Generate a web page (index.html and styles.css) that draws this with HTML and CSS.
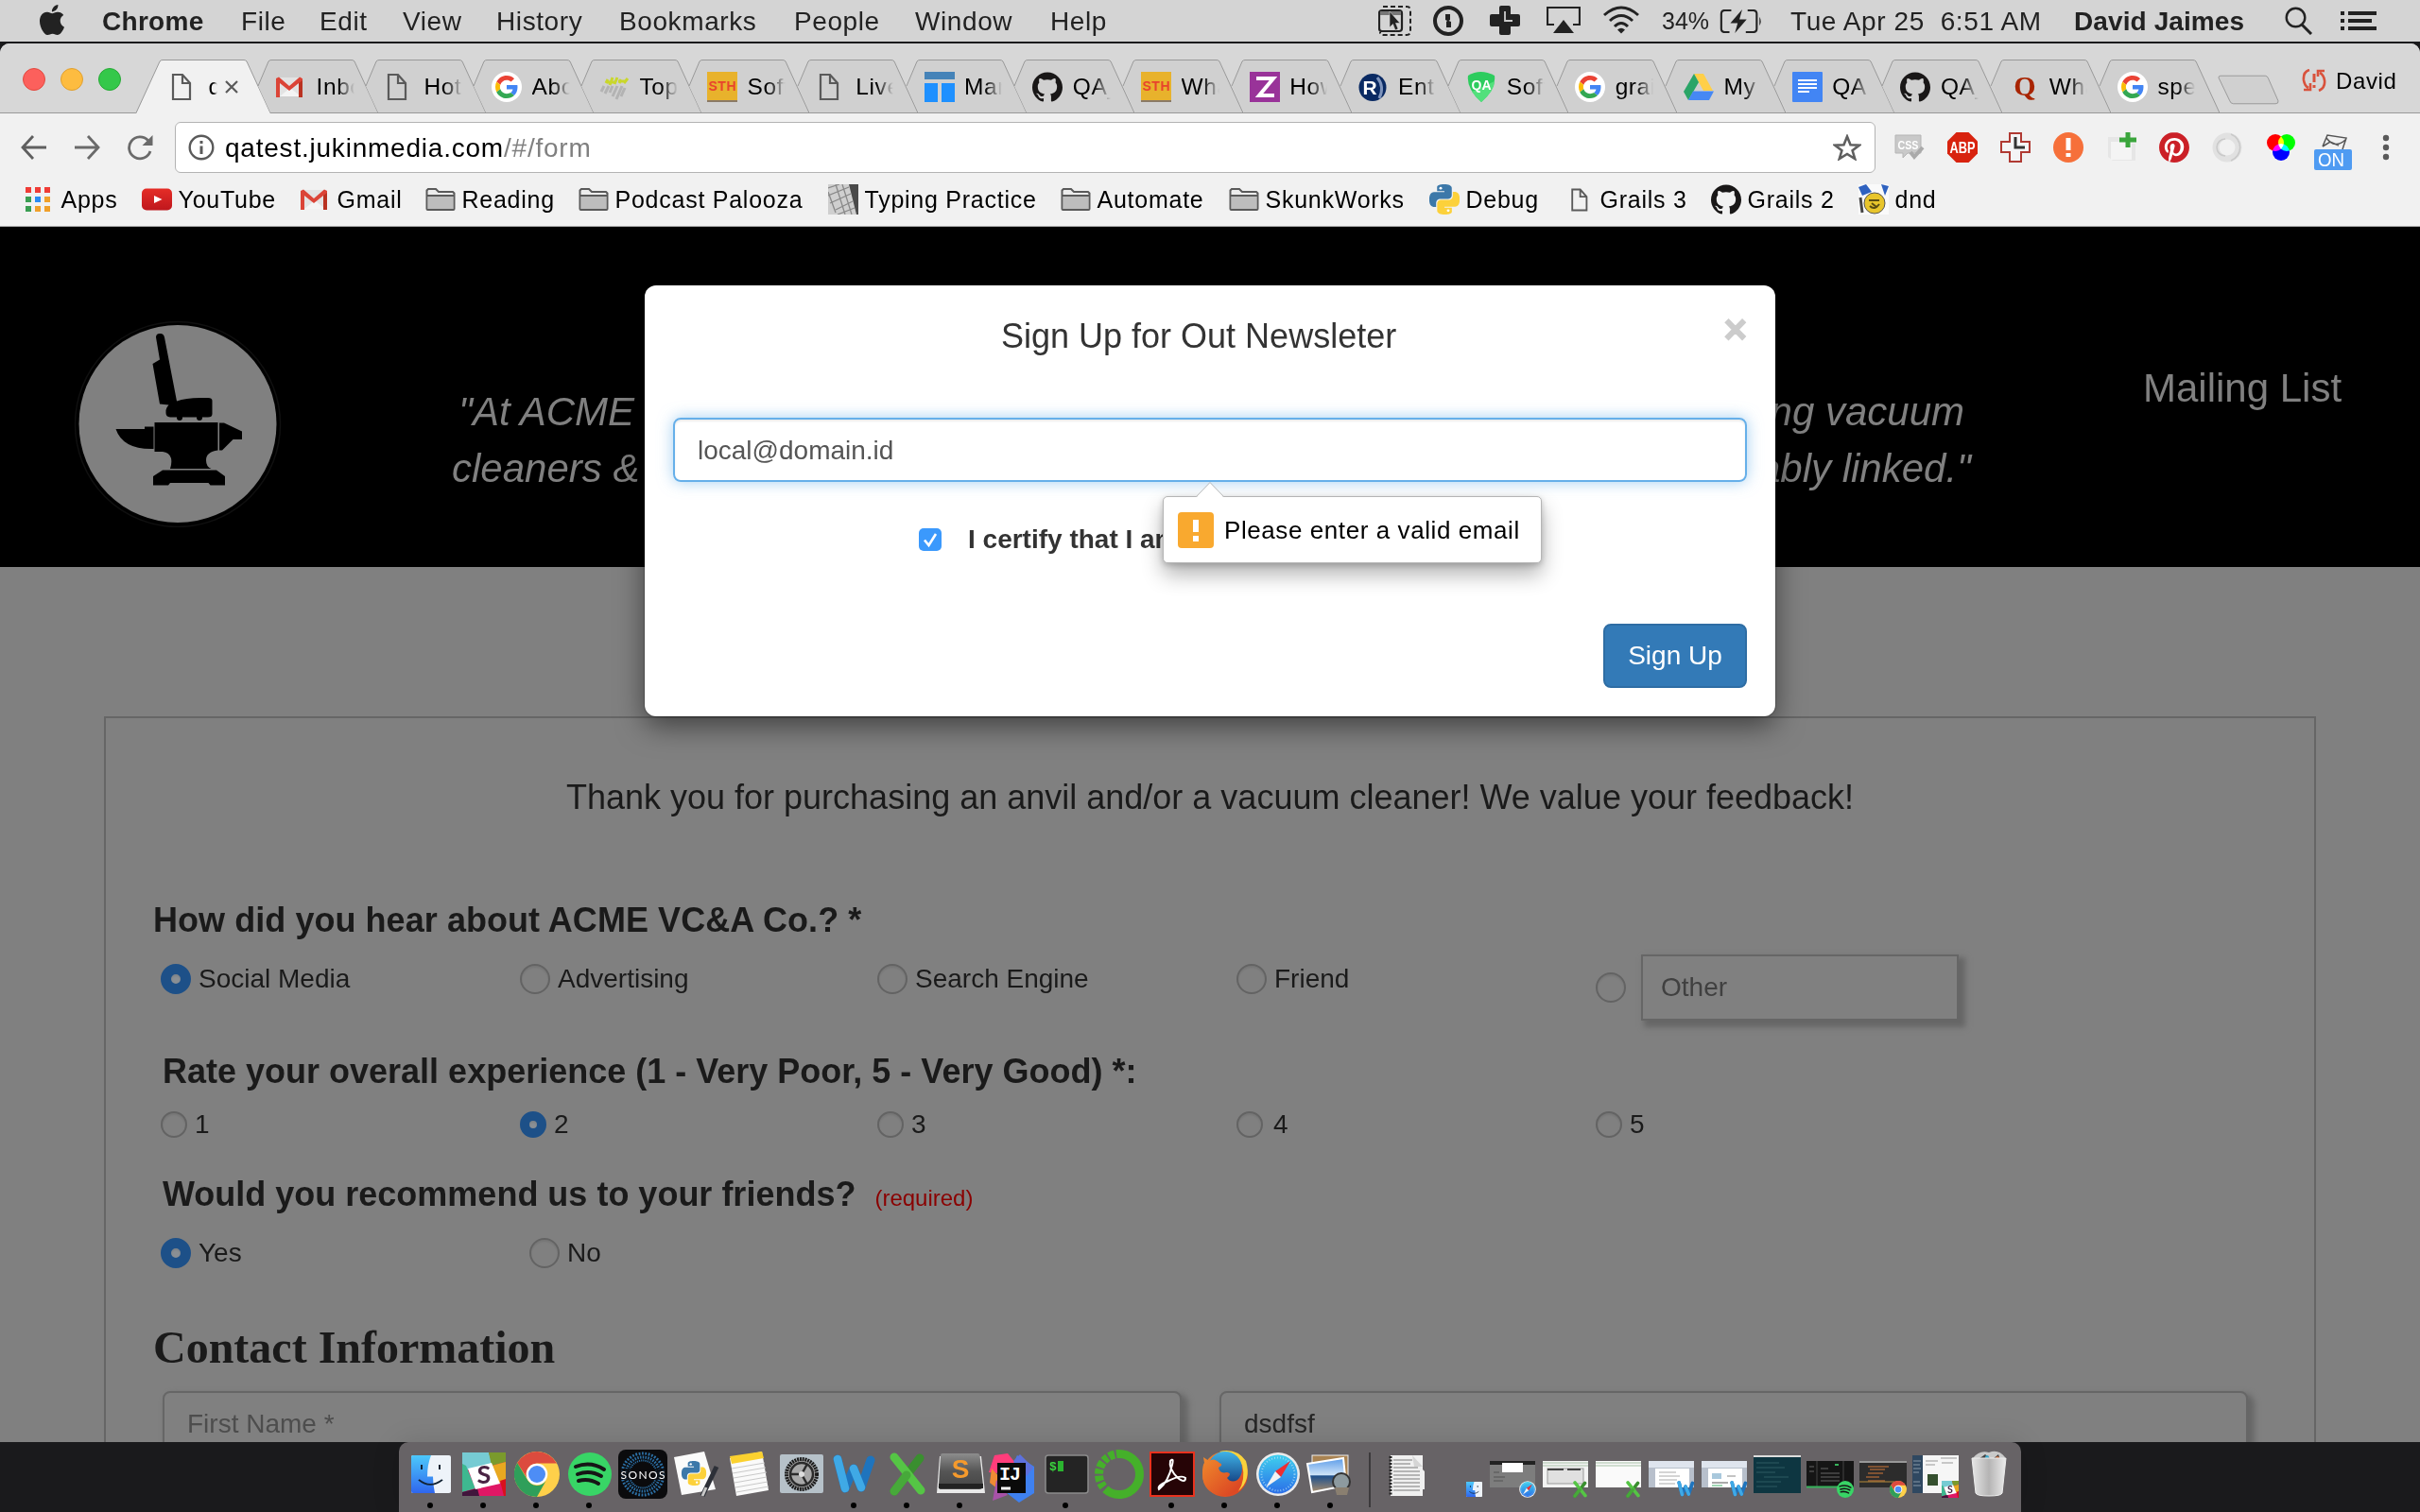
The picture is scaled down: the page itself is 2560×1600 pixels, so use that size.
FILE: index.html
```html
<!DOCTYPE html>
<html lang="en">
<head>
<meta charset="utf-8">
<title>ACME VC&amp;A Co.</title>
<link rel="stylesheet" href="styles.css">
</head>
<body>
<svg class="defs" width="0" height="0">
  <defs>
    <linearGradient id="g-finder" x1="0" y1="0" x2="0" y2="1"><stop offset="0" stop-color="#4cc9fb"/><stop offset="1" stop-color="#2f66ee"/></linearGradient>
    <linearGradient id="g-grey" x1="0" y1="0" x2="0" y2="1"><stop offset="0" stop-color="#8d8d8d"/><stop offset=".5" stop-color="#555"/><stop offset="1" stop-color="#444"/></linearGradient>
    <linearGradient id="g-safari" x1="0" y1="0" x2="0" y2="1"><stop offset="0" stop-color="#3fd0ee"/><stop offset="1" stop-color="#2b6ee8"/></linearGradient>
    <linearGradient id="g-ff" x1="0" y1="0" x2="0" y2="1"><stop offset="0" stop-color="#3fb4e8"/><stop offset="1" stop-color="#123a7c"/></linearGradient>
    <linearGradient id="g-fox" x1="0" y1="0" x2="1" y2="1"><stop offset="0" stop-color="#f08a2c"/><stop offset="1" stop-color="#d83c22"/></linearGradient>
    <linearGradient id="g-sky" x1="0" y1="0" x2="0" y2="1"><stop offset="0" stop-color="#5b9be8"/><stop offset=".5" stop-color="#cfe4f8"/><stop offset=".52" stop-color="#1d4f8c"/><stop offset="1" stop-color="#a88d6c"/></linearGradient>
    <linearGradient id="g-yt" x1="0" y1="0" x2="0" y2="1"><stop offset="0" stop-color="#e52d27"/><stop offset="1" stop-color="#bf171d"/></linearGradient>
    <linearGradient id="g-word" x1="0" y1="0" x2="0" y2="1"><stop offset="0" stop-color="#4dbdf0"/><stop offset="1" stop-color="#2b8fd8"/></linearGradient>
    <linearGradient id="g-trash" x1="0" y1="0" x2="1" y2="0"><stop offset="0" stop-color="#e6e6e6"/><stop offset=".5" stop-color="#b5b4b4"/><stop offset="1" stop-color="#ececec"/></linearGradient>
  </defs>
  <symbol id="tab-on" viewBox="0 0 142 57"><path d="M0 57 25 2Q26 .5 28 .5H114Q116 .5 117 2L142 57Z" fill="#f1f1f1"/><path d="M0 56.5 25 2Q26 .5 28 .5H114Q116 .5 117 2L142 56.5" fill="none" stroke="#999"/></symbol>
  <symbol id="tab-off" viewBox="0 0 142 57"><path d="M28 56 15 28 26 2Q27 .5 29 .5H114Q116 .5 117 2L142 56Z" fill="#d0d0d0"/><path d="M15 28 26 2Q27 .5 29 .5H114Q116 .5 117 2L142 56.5" fill="none" stroke="#999"/></symbol>
  <symbol id="i-file" viewBox="0 0 32 32"><path d="M5 3H15L23 12V29H5Z M15 3V12H23" fill="none" stroke="#5a5a5a" stroke-width="2.200"/></symbol>
  <symbol id="i-gmail" viewBox="0 0 32 32"><rect x="2" y="6" width="26" height="20" fill="#e3e3e3"/><path d="M4 26 15 17 26 26Z" fill="#f4f4f4"/><path d="M0 7V27H4V12L14 20 24 12V27H28V7L25 5.500 14 15 3 5.500Z" fill="#db4437"/><path d="M24 12V27H28V9Z" fill="#b93221"/></symbol>
  <symbol id="i-google" viewBox="0 0 32 32"><circle cx="16" cy="16" r="16" fill="#fff"/><g transform="translate(4 4) scale(.5)"><path fill="#EA4335" d="M24 9.500c3.540 0 6.710 1.220 9.210 3.600l6.850-6.850C35.900 2.380 30.470 0 24 0 14.620 0 6.510 5.380 2.560 13.220l7.980 6.190C12.430 13.720 17.740 9.500 24 9.500z"/><path fill="#4285F4" d="M46.980 24.550c0-1.570-.15-3.090-.38-4.550H24v9.020h12.940c-.58 2.960-2.260 5.480-4.780 7.180l7.730 6c4.510-4.180 7.090-10.360 7.090-17.650z"/><path fill="#FBBC05" d="M10.530 28.590c-.48-1.450-.76-2.990-.76-4.590s.27-3.140.76-4.590l-7.980-6.190C.92 16.460 0 20.120 0 24c0 3.880.92 7.540 2.560 10.780l7.970-6.190z"/><path fill="#34A853" d="M24 48c6.480 0 11.930-2.130 15.890-5.810l-7.730-6c-2.150 1.450-4.920 2.300-8.160 2.300-6.260 0-11.570-4.220-13.470-9.910l-7.980 6.190C6.510 42.620 14.620 48 24 48z"/></g></symbol>
  <symbol id="i-top" viewBox="0 0 32 32"><g stroke-width="3"><path d="M7 12 9 8M11 14 14 6M16 13 19 6M21 12 23 8M26 12 30 7M7 11H17M20 10H28" stroke="#c9d72b"/><path d="M2 21 5 15M6 23 10 15M11 22 14 15M14 26 19 15M18 29 24 15M23 26 27 17" stroke="#b3b3b3"/></g></symbol>
  <symbol id="i-sth" viewBox="0 0 32 32"><rect width="32" height="32" fill="#e8b22c"/><rect y="30" width="32" height="2" fill="#8a7a66"/><text x="16" y="20" text-anchor="middle" class="t-sth" textLength="29">STH</text></symbol>
  <symbol id="i-github" viewBox="0 0 24 24"><path fill="#191717" d="M12 .297c-6.630 0-12 5.373-12 12 0 5.303 3.438 9.800 8.205 11.385.6.113.82-.258.82-.577 0-.285-.01-1.040-.015-2.040-3.338.724-4.042-1.610-4.042-1.610C4.422 18.070 3.633 17.700 3.633 17.700c-1.087-.744.084-.729.084-.729 1.205.084 1.838 1.236 1.838 1.236 1.070 1.835 2.809 1.305 3.495.998.108-.776.417-1.305.76-1.605-2.665-.3-5.466-1.332-5.466-5.930 0-1.310.465-2.380 1.235-3.220-.135-.303-.54-1.523.105-3.176 0 0 1.005-.322 3.300 1.230.96-.267 1.980-.399 3-.405 1.020.006 2.040.138 3 .405 2.280-1.552 3.285-1.230 3.285-1.230.645 1.653.24 2.873.12 3.176.765.84 1.230 1.910 1.230 3.220 0 4.610-2.805 5.625-5.475 5.920.42.36.81 1.096.81 2.220 0 1.606-.015 2.896-.015 3.286 0 .315.21.69.825.57C20.565 22.092 24 17.592 24 12.297c0-6.627-5.373-12-12-12"/></symbol>
  <symbol id="i-folder" viewBox="0 0 32 32"><path d="M1.500 26V6.500L3 5H11L14 8H29L30.500 9.500V26Q30.500 27 29.500 27H2.500Q1.500 27 1.500 26Z" fill="#ececec" stroke="#5a5a5a" stroke-width="2"/><path d="M3 13H29V26H3Z" fill="#bdbdbd"/><path d="M2 12H30" stroke="#5a5a5a" stroke-width="2"/></symbol>
  <symbol id="i-python" viewBox="0 0 24 24"><path fill="#3c78a9" fill-rule="evenodd" d="M14.250.18l.9.2.73.26.59.3.45.32.34.34.25.34.16.33.1.3.04.26.02.2-.01.13V8.500l-.05.63-.13.55-.21.46-.26.38-.3.31-.33.25-.35.19-.35.14-.33.1-.3.07-.26.04-.21.02H8.770l-.69.05-.59.14-.5.22-.41.27-.33.32-.27.35-.2.36-.15.37-.1.35-.07.32-.04.27-.02.21v3.060H3.170l-.21-.03-.28-.07-.32-.12-.35-.18-.36-.26-.36-.36-.35-.46-.32-.59-.28-.73-.21-.88-.14-1.050-.05-1.230.06-1.220.16-1.040.24-.87.32-.71.36-.57.4-.44.42-.33.42-.24.4-.16.36-.1.32-.05.24-.01h.16l.06.01h8.160v-.83H6.180l-.01-2.750-.02-.37.05-.34.11-.31.17-.28.25-.26.31-.23.38-.2.44-.18.51-.15.58-.12.64-.1.71-.06.77-.04.84-.02 1.270.05z"/><path fill="#fcd13b" d="M21.100 6.110l.28.06.32.12.35.18.36.27.36.35.35.47.32.59.28.73.21.88.14 1.040.05 1.230-.06 1.230-.16 1.040-.24.86-.32.71-.36.57-.4.45-.42.33-.42.24-.4.16-.36.09-.32.05-.24.02-.16-.01h-8.220v.82h5.840l.01 2.760.02.36-.05.34-.11.31-.17.29-.25.25-.31.24-.38.2-.44.17-.51.15-.58.13-.64.09-.71.07-.77.04-.84.01-1.270-.04-1.070-.14-.9-.2-.73-.25-.59-.3-.45-.33-.34-.34-.25-.34-.16-.33-.1-.3-.04-.25-.02-.2.01-.13v-5.340l.05-.64.13-.54.21-.46.26-.38.3-.32.33-.24.35-.2.35-.14.33-.1.3-.06.26-.04.21-.02.13-.01h5.840l.69-.05.59-.14.5-.21.41-.28.33-.32.27-.35.2-.36.15-.36.1-.35.07-.32.04-.28.02-.21V6.070h2.090l.14.01z"/><circle cx="9" cy="3.100" r="1.100" fill="#fff"/><circle cx="15" cy="20.900" r="1.100" fill="#fff"/></symbol>
  <symbol id="d-finder" viewBox="0 0 42 48" preserveAspectRatio="none"><rect width="42" height="48" rx="2" fill="#eef3f9"/><path d="M2 0H21Q17 12 17 27H23Q23 38 25 48H2Q0 48 0 46V2Q0 0 2 0Z" fill="url(#g-finder)"/><path d="M11 12V18M30 12V18M8 31Q20 43 33 31" stroke="#123" stroke-width="2" fill="none"/></symbol>
  <symbol id="d-slack" viewBox="0 0 46 46"><rect width="46" height="46" rx="3" fill="#e01765"/><path d="M0 0H28L32 13 3 19 0 20Z" fill="#76cbd3"/><path d="M28 0H46V10L31 14Z" fill="#7a9a2c"/><path d="M46 10V30L36 33 31 14Z" fill="#e8a820"/><path d="M0 12 4 14 14 38 0 42Z" fill="#3eb890"/><path d="M0 42 16 38 18 46H0Z" fill="#41153c"/><path d="M40 30 46 28V46H44Z" fill="#d8111c"/><path d="M6 17 31 11 40 33 14 39Z" fill="#fff"/><text x="23" y="33" text-anchor="middle" class="t-slack">S</text></symbol>
  <symbol id="d-chrome" viewBox="0 0 48 48"><circle cx="24" cy="24" r="24" fill="#ffd04a"/><path d="M3.200 12A24 24 0 0 1 45 12.500H24A11.500 11.500 0 0 0 13.500 28Z" fill="#dc4b3e"/><path d="M3.200 12A24 24 0 0 0 24 48L33.500 31A11.500 11.500 0 0 1 14 30Z" fill="#2f9f5a"/><circle cx="24" cy="24" r="11.300" fill="#fff"/><circle cx="24" cy="24" r="9" fill="#4d8df6"/></symbol>
  <symbol id="d-spotify" viewBox="0 0 46 46"><circle cx="23" cy="23" r="23" fill="#38d566"/><path d="M8 15Q24 9 38 18M10 23Q23 18 35 25M11 30Q22 27 32 33" fill="none" stroke="#161616" stroke-width="4" stroke-linecap="round"/></symbol>
  <symbol id="d-word" viewBox="0 0 46 42"><path d="M5 5 13 36 22 15 30 35 40 6" fill="none" stroke="#1f74bd" stroke-width="9" stroke-linecap="round" stroke-linejoin="round"/><path d="M5 5 13 36M22 15 30 35" fill="none" stroke="#3fa9e6" stroke-width="8.500" stroke-linecap="round"/></symbol>
  <symbol id="d-excel" viewBox="0 0 38 46"><path d="M32 6 5 41" stroke="#3a8f2f" stroke-width="9" stroke-linecap="round"/><path d="M5 5 33 40" stroke="#55c545" stroke-width="9" stroke-linecap="round"/><path d="M5 41 18 24" stroke="#47a93a" stroke-width="9" stroke-linecap="round"/></symbol>
  <symbol id="d-safari" viewBox="0 0 52 46"><ellipse cx="26" cy="23" rx="23" ry="23" fill="#ececec"/><circle cx="26" cy="23" r="20.500" fill="url(#g-safari)"/><circle cx="26" cy="23" r="17.500" fill="none" stroke="#a9dcf5" stroke-width="2" stroke-dasharray=".8 2.200"/><path d="M39 9 29 26 23 20Z" fill="#ee2d31"/><path d="M13 37 23 20 29 26Z" fill="#f2f2f2"/></symbol>
</svg>

<header class="menubar">
  <svg class="apple" viewBox="0 0 24 24"><path fill="#222" d="M12.152 6.896c-.948 0-2.415-1.078-3.960-1.040-2.040.027-3.910 1.183-4.961 3.014-2.117 3.675-.546 9.103 1.519 12.090 1.013 1.454 2.208 3.090 3.792 3.039 1.520-.065 2.090-.987 3.935-.987 1.831 0 2.350.987 3.960.948 1.637-.026 2.676-1.480 3.676-2.948 1.156-1.688 1.636-3.325 1.662-3.415-.039-.013-3.182-1.221-3.220-4.857-.026-3.040 2.480-4.494 2.597-4.559-1.429-2.090-3.623-2.324-4.390-2.376-2-.156-3.675 1.090-4.610 1.090zM15.530 3.830c.843-1.012 1.400-2.427 1.245-3.830-1.207.052-2.662.805-3.532 1.818-.78.896-1.454 2.338-1.273 3.714 1.338.104 2.715-.688 3.559-1.701"/></svg>
  <nav class="app-menu"><b>Chrome</b><span>File</span><span>Edit</span><span>View</span><span>History</span><span>Bookmarks</span><span>People</span><span>Window</span><span>Help</span></nav>
  <div class="status">
    <svg viewBox="0 0 36 32"><path d="M5 1H30Q34 1 34 5V27Q34 31 30 31H5Q2 31 2 28" fill="none" stroke="#222" stroke-width="2" stroke-dasharray="5 3"/><rect x="1" y="5" width="24" height="22" rx="3" fill="none" stroke="#222" stroke-width="2.200"/><path d="M2 6H24V10H2Z" fill="#777"/><path d="M12 6V23L15.500 19.500 18 26 21 24.500 18.500 18.500H23Z" fill="#222" stroke="#d4d4d4" stroke-width=".6"/></svg>
    <svg viewBox="0 0 36 32"><circle cx="17" cy="16" r="14" fill="none" stroke="#222" stroke-width="4"/><path d="M14 9H19V15L17.500 16 20 17V23H15V17L16 16 14 15Z" fill="#222"/></svg>
    <svg viewBox="0 0 36 32"><path d="M10 2Q10 0 12 0H20Q22 0 22 2V9H30Q32 9 32 11V20Q32 22 30 22H22V29Q22 31 20 31H12Q10 31 10 29V22H2Q0 22 0 20V11Q0 9 2 9H10Z" fill="#222"/><path d="M16 6V16H24" fill="none" stroke="#ccc" stroke-width="1.800"/></svg>
    <svg viewBox="0 0 36 32"><path d="M8 20H1V2H35V20H28" fill="none" stroke="#222" stroke-width="2.200"/><path d="M7 29 18 15 29 29Z" fill="#222"/></svg>
    <svg viewBox="0 0 40 32" class="wifi"><path d="M2 10Q20-6 38 10M8 16Q20 5 32 16M13 22Q20 15 27 22" fill="none" stroke="#222" stroke-width="3"/><path d="M16 25.500Q20 22 24 25.500L20 29.500Z" fill="#222"/></svg>
    <span class="pct">34%</span>
    <svg viewBox="0 0 46 26" class="batt"><path d="M12 1H5Q1 1 1 5V21Q1 25 5 25H10M30 1H36Q40 1 40 5V21Q40 25 36 25H28" fill="none" stroke="#222" stroke-width="2.200"/><path d="M43 8Q46 13 43 18Z" fill="#222"/><path d="M24 0 11 15H19L16 26 29 11H21Z" fill="#222"/></svg>
    <span>Tue Apr 25&nbsp; 6:51 AM</span>
    <b>David Jaimes</b>
    <svg viewBox="0 0 30 30" class="search"><circle cx="11.500" cy="11.500" r="9.800" fill="none" stroke="#222" stroke-width="2.400"/><path d="M18 19 28 29" stroke="#222" stroke-width="3"/></svg>
    <svg viewBox="0 0 38 22" class="list"><path d="M0 3H4M8 3H38M0 11H4M8 11H33M0 19H4M8 19H38" stroke="#222" stroke-width="4"/></svg>
  </div>
</header>

<section class="window">
  <div class="tabstrip">
    <div class="lights"><i></i><i></i><i></i></div>
    <div class="tabs">
      <div class="tab on"><svg class="shape"><use href="#tab-on"/></svg><svg class="fav"><use href="#i-file"/></svg><span>q</span><svg class="x" viewBox="0 0 14 14"><path d="M1 1 13 13M13 1 1 13" stroke="#5a5a5a" stroke-width="2.200"/></svg></div>
      <div class="tab"><svg class="shape"><use href="#tab-off"/></svg><svg class="fav"><use href="#i-gmail"/></svg><span>Inbox</span></div>
      <div class="tab"><svg class="shape"><use href="#tab-off"/></svg><svg class="fav"><use href="#i-file"/></svg><span>Hot</span></div>
      <div class="tab"><svg class="shape"><use href="#tab-off"/></svg><svg class="fav"><use href="#i-google"/></svg><span>Abo</span></div>
      <div class="tab"><svg class="shape"><use href="#tab-off"/></svg><svg class="fav"><use href="#i-top"/></svg><span>Top</span></div>
      <div class="tab"><svg class="shape"><use href="#tab-off"/></svg><svg class="fav"><use href="#i-sth"/></svg><span>Soft</span></div>
      <div class="tab"><svg class="shape"><use href="#tab-off"/></svg><svg class="fav"><use href="#i-file"/></svg><span>Live</span></div>
      <div class="tab"><svg class="shape"><use href="#tab-off"/></svg><svg class="fav" viewBox="0 0 32 32"><path d="M0 0H32V8H0Z" fill="#4583b8"/><path d="M0 12H14V32H0ZM18 12H32V32H18Z" fill="#1e90ff"/></svg><span>Man</span></div>
      <div class="tab"><svg class="shape"><use href="#tab-off"/></svg><svg class="fav"><use href="#i-github"/></svg><span>QA_</span></div>
      <div class="tab"><svg class="shape"><use href="#tab-off"/></svg><svg class="fav"><use href="#i-sth"/></svg><span>Wha</span></div>
      <div class="tab"><svg class="shape"><use href="#tab-off"/></svg><svg class="fav" viewBox="0 0 32 32"><rect width="32" height="32" fill="#993399"/><path d="M7 7H25L10 25H26" fill="none" stroke="#fff" stroke-width="4"/></svg><span>How</span></div>
      <div class="tab"><svg class="shape"><use href="#tab-off"/></svg><svg class="fav" viewBox="0 0 32 32"><circle cx="15" cy="16.500" r="14.500" fill="#0a2a63"/><path d="M20 6Q28 16 22 28" stroke="#7f95bd" stroke-width="3" fill="none"/><text x="12" y="24" text-anchor="middle" class="t-r">R</text></svg><span>Ente</span></div>
      <div class="tab"><svg class="shape"><use href="#tab-off"/></svg><svg class="fav" viewBox="0 0 32 32"><path d="M2 4Q15-4 30 4Q32 18 16 32Q0 18 2 4Z" fill="#2dcc5e"/><path d="M30 10Q30 20 16 32Q10 27 6 21Z" fill="#52e07c"/><text x="16" y="19" text-anchor="middle" class="t-qa">QA</text></svg><span>Soft</span></div>
      <div class="tab"><svg class="shape"><use href="#tab-off"/></svg><svg class="fav"><use href="#i-google"/></svg><span>grai</span></div>
      <div class="tab"><svg class="shape"><use href="#tab-off"/></svg><svg class="fav" viewBox="0 0 32 32"><path d="M11 2H21L31 20H21Z" fill="#ffcf48"/><path d="M11 2 0 21 5 30 16 11Z" fill="#2aa567"/><path d="M10 20.500H32L27 30H5Z" fill="#4688f4"/></svg><span>My</span></div>
      <div class="tab"><svg class="shape"><use href="#tab-off"/></svg><svg class="fav" viewBox="0 0 32 32"><rect width="32" height="32" rx="1" fill="#4285f4"/><path d="M6 9H26M6 13H26M6 17H26M6 21H18" stroke="#fff" stroke-width="2.200"/></svg><span>QA</span></div>
      <div class="tab"><svg class="shape"><use href="#tab-off"/></svg><svg class="fav"><use href="#i-github"/></svg><span>QA_</span></div>
      <div class="tab"><svg class="shape"><use href="#tab-off"/></svg><svg class="fav" viewBox="0 0 32 32"><text x="17" y="25" text-anchor="middle" class="t-q">Q</text></svg><span>Wha</span></div>
      <div class="tab"><svg class="shape"><use href="#tab-off"/></svg><svg class="fav"><use href="#i-google"/></svg><span>spe</span></div>
    </div>
    <svg class="newtab" viewBox="0 0 66 32"><path d="M3 1H51Q53 1 54 3L65 28Q65.500 31 62 31H17Q14 31 13 28L1 3Q1 1 3 1Z" fill="#d0d0d0" stroke="#999"/></svg>
    <svg class="sync" viewBox="0 0 26 24"><path d="M8 1Q1 3 2 12Q3 18 7 20M18 23Q25 20 24 12Q23 6 19 4M9 15V22H2M17 8V2H24" fill="none" stroke="#d9523c" stroke-width="2.600"/><path d="M13 5V14M13 17V20" stroke="#d9523c" stroke-width="3"/></svg>
    <span class="who">David</span>
  </div>

  <div class="toolbar">
    <svg class="nav" viewBox="0 0 28 28"><path d="M27 14H2M13 2 2 14 13 26" fill="none" stroke="#5f5f5f" stroke-width="2.800"/></svg>
    <svg class="nav" viewBox="0 0 28 28"><path d="M1 14H26M15 2 26 14 15 26" fill="none" stroke="#6a6a6a" stroke-width="2.800"/></svg>
    <svg class="nav" viewBox="0 0 28 28"><path d="M22.500 6.500A11.500 11.500 0 1 0 25 18" fill="none" stroke="#6a6a6a" stroke-width="2.800"/><path d="M27.500 1V12H16.500Z" fill="#6a6a6a"/></svg>
    <div class="omnibox">
      <svg class="info" viewBox="0 0 28 28"><circle cx="14" cy="14" r="12.300" fill="none" stroke="#5a5a5a" stroke-width="2.400"/><path d="M14 7V10M14 12.500V21" stroke="#5a5a5a" stroke-width="3"/></svg>
      <span class="url">qatest.jukinmedia.com<em>/#/form</em></span>
      <svg class="star" viewBox="0 0 30 28"><path d="M15 2.500 18.500 11.200 28 11.600 20.600 17.300 23.200 26 15 21 6.800 26 9.400 17.300 2 11.600 11.500 11.200Z" fill="none" stroke="#5f5f5f" stroke-width="2.600"/></svg>
    </div>
    <div class="exts">
      <svg viewBox="0 0 32 32"><path d="M1 3H28V22H14L9 27V22H1Z" fill="#c9c9c9" stroke="#b5b5b5"/><text x="14.500" y="18" text-anchor="middle" class="t-css" textLength="22" lengthAdjust="spacingAndGlyphs">CSS</text><path d="M17 21 21 26 30 16" fill="none" stroke="#aaa" stroke-width="4"/></svg>
      <svg viewBox="0 0 32 32"><path d="M9.500 0H22.500L32 9.500V22.500L22.500 32H9.500L0 22.500V9.500Z" fill="#d8230f"/><text x="16" y="22" text-anchor="middle" class="t-abp" textLength="27" lengthAdjust="spacingAndGlyphs">ABP</text></svg>
      <svg viewBox="0 0 32 32"><path d="M10 1H22V10H31V21H22V31H10V21H1V10H10Z" fill="#f4f4f6" stroke="#b03a33" stroke-width="2"/><path d="M16 5V16H26" fill="none" stroke="#333" stroke-width="3"/></svg>
      <svg viewBox="0 0 32 32"><circle cx="16" cy="16" r="16" fill="#f6703a"/><path d="M16 6V19M16 22V26" stroke="#fff" stroke-width="5"/></svg>
      <svg viewBox="0 0 32 32"><path d="M1 5H14V12H30V30H6L1 26Z" fill="#e6e6e6"/><path d="M4 10H26V29H4Z" fill="#f4f4f4"/><path d="M22 0V16M13 8H31" stroke="#3aa53c" stroke-width="5"/></svg>
      <svg viewBox="0 0 24 24"><circle cx="12" cy="12" r="10" fill="#fff"/><path fill="#cb2027" d="M12.017 0C5.396 0 .029 5.367.029 11.987c0 5.079 3.158 9.417 7.618 11.162-.105-.949-.199-2.403.041-3.439.219-.937 1.406-5.957 1.406-5.957s-.359-.72-.359-1.781c0-1.663.967-2.911 2.168-2.911 1.024 0 1.518.769 1.518 1.688 0 1.029-.653 2.567-.992 3.992-.285 1.193.6 2.165 1.775 2.165 2.128 0 3.768-2.245 3.768-5.487 0-2.861-2.063-4.869-5.008-4.869-3.410 0-5.409 2.562-5.409 5.199 0 1.033.394 2.143.889 2.741.099.12.112.225.085.345-.09.375-.293 1.199-.334 1.363-.053.225-.172.271-.401.165-1.495-.69-2.433-2.878-2.433-4.646 0-3.776 2.748-7.252 7.920-7.252 4.158 0 7.392 2.967 7.392 6.923 0 4.135-2.607 7.462-6.233 7.462-1.214 0-2.354-.629-2.758-1.379l-.749 2.848c-.269 1.045-1.004 2.352-1.498 3.146 1.123.345 2.306.535 3.550.535 6.607 0 11.985-5.365 11.985-11.987C23.970 5.390 18.592.026 11.985.026L12.017 0z"/></svg>
      <svg viewBox="0 0 32 32"><circle cx="16" cy="16" r="12" fill="none" stroke="#e1e1e1" stroke-width="7"/><path d="M14 7A9 9 0 0 0 14 25M20 2A15 15 0 0 1 20 30" fill="none" stroke="#c9c9c9" stroke-width="1.500"/></svg>
      <svg viewBox="0 0 32 32"><g class="rgb"><circle cx="10" cy="11" r="9" fill="#f00"/><circle cx="22" cy="11" r="9" fill="#0f0"/><circle cx="16" cy="21" r="9" fill="#00f"/></g></svg>
      <svg viewBox="0 0 40 40" class="onext"><path d="M9 15 14 3 34 6 30 18M13 6Q22 18 33 8M9 15 17 10 26 14" fill="none" stroke="#555" stroke-width="1.500"/><rect y="18" width="40" height="22" rx="2" fill="#4f9bf2"/><text x="18" y="36" text-anchor="middle" class="t-on" textLength="28" lengthAdjust="spacingAndGlyphs">ON</text></svg>
      <svg viewBox="0 0 8 28" class="dots"><circle cx="4" cy="4" r="3.200"/><circle cx="4" cy="14" r="3.200"/><circle cx="4" cy="24" r="3.200"/></svg>
    </div>
  </div>

  <nav class="bookmarks">
    <a><svg viewBox="0 0 32 32"><path d="M1 3H7V9H1ZM11 3H17V9H11ZM21 3H27V9H21Z" fill="#ef3c36"/><path d="M1 13H7V19H1ZM1 23H7V29H1Z" fill="#3a9e52"/><path d="M11 13H17V19H11Z" fill="#2a8bf2"/><path d="M11 23H17V29H11Z" fill="#f0a02a"/><path d="M21 13H27V19H21ZM21 23H27V29H21Z" fill="#f0a02a"/></svg>Apps</a>
    <a><svg viewBox="0 0 32 32"><rect y="4.500" width="32" height="23" rx="5" fill="url(#g-yt)"/><path d="M13 12 21.500 16 13 20Z" fill="#fff"/></svg>YouTube</a>
    <a><svg><use href="#i-gmail"/></svg>Gmail</a>
    <a><svg><use href="#i-folder"/></svg>Reading</a>
    <a><svg><use href="#i-folder"/></svg>Podcast Palooza</a>
    <a><svg viewBox="0 0 32 32"><rect width="32" height="32" fill="#cfcfcf"/><path d="M22 0H32V32H30Z" fill="#4a4a4a"/><path d="M0 4 12 0M0 12 22 3M2 20 24 10M8 27 26 18M10 32 28 25M8 0 18 32M0 8 8 30M15 0 25 32" stroke="#888" stroke-width="1.300"/></svg>Typing Practice</a>
    <a><svg><use href="#i-folder"/></svg>Automate</a>
    <a><svg><use href="#i-folder"/></svg>SkunkWorks</a>
    <a><svg><use href="#i-python"/></svg>Debug</a>
    <a><svg class="small"><use href="#i-file"/></svg>Grails 3</a>
    <a><svg><use href="#i-github"/></svg>Grails 2</a>
    <a><svg viewBox="0 0 32 32"><rect width="32" height="32" fill="#fafafa"/><path d="M0 3 8 0 14 8 4 12ZM24 0 32 2 28 12Z" fill="#2f62c0"/><circle cx="17" cy="20" r="11" fill="#e8c52c" stroke="#555"/><path d="M11 17H22M12 23Q17 28 22 21M14 20 19 24" stroke="#5a4c12" stroke-width="2" fill="none"/><path d="M2 14 4 30" stroke="#444" stroke-width="3"/></svg>dnd</a>
  </nav>

  <main class="page">
    <header class="hero">
      <svg class="logo" viewBox="78 338 220 220"><circle cx="188" cy="449" r="108.500" fill="none" stroke="#101010" stroke-width="1.500"/><circle cx="188" cy="448.500" r="104.500" fill="#808080"/>
        <path d="M165 357Q165 353 169 353Q173 352.500 174 357L187 424.500Q196 421 212 421H220Q224.500 421 224.500 424V438Q224.500 441.500 220 441.500H180Q175.500 441 175.500 437V434Q176 431 178.500 428.500L169 427.500 161.500 385 169 380.500Z"/><circle cx="190" cy="442" r="3"/><circle cx="211" cy="442" r="3"/>
        <path d="M122.500 454H153V451.500H162.500V475Q130 476 122.500 454ZM163.500 447H230.500V476.500Q218 478 218 487Q218 494 223.500 496H180Q182 490 181 485Q179 478.500 172 478H163.500ZM232 447.500H237L256 456.500V465H246.500L235 476.500H232ZM172 497.500H229L238 504V513.500H222.500L220.500 511H180L178 513.500H162V504Z"/></svg>
      <div class="quote"><p><span>"At ACME</span><span>ing vacuum</span></p><p><span>cleaners &amp;</span><span>ably linked."</span></p></div>
      <a class="mailing">Mailing List</a>
    </header>
    <form class="survey">
      <p class="thanks">Thank you for purchasing an anvil and/or a vacuum cleaner! We value your feedback!</p>
      <h3 class="q q1">How did you hear about ACME VC&amp;A Co.? *</h3>
      <div class="opts big">
        <label><i class="on"></i>Social Media</label><label><i></i>Advertising</label><label><i></i>Search Engine</label><label><i></i>Friend</label><label class="other"><i></i><span class="field">Other</span></label>
      </div>
      <h3 class="q q2">Rate your overall experience (1 - Very Poor, 5 - Very Good) *:</h3>
      <div class="opts"><label><i></i>1</label><label><i class="on"></i>2</label><label><i></i>3</label><label class="four"><i></i>4</label><label><i></i>5</label></div>
      <h3 class="q q3">Would you recommend us to your friends? <small>(required)</small></h3>
      <div class="opts yesno"><label><i class="on"></i>Yes</label><label><i></i>No</label></div>
      <h2>Contact Information</h2>
      <div class="inputs"><span class="ph">First Name *</span><span>dsdfsf</span></div>
    </form>
  </main>
</section>

<div class="modal">
  <div class="modal-head"><h4>Sign Up for Out Newsleter</h4><b class="close">×</b></div>
  <div class="email">local@domain.id</div>
  <div class="certify"><svg class="check" viewBox="0 0 24 24"><rect width="24" height="24" rx="5" fill="#3b99fc"/><path d="M6 12.500 10.500 18 18 6" fill="none" stroke="#fff" stroke-width="2.600"/></svg><b>I certify that I am</b></div>
  <div class="actions"><button type="button">Sign Up</button></div>
  <div class="tip">
    <svg class="arrow" viewBox="0 0 32 18"><path d="M1 18 16 2 31 18Z" fill="#fff"/><path d="M1 17 16 1.500 31 17" fill="none" stroke="#bbb"/></svg>
    <svg class="warn" viewBox="0 0 38 38"><rect width="38" height="38" rx="4" fill="#f9a92f"/><path d="M19 8V21M19 25V31" stroke="#fff" stroke-width="6"/></svg>
    <span>Please enter a valid email</span>
  </div>
</div>

<footer class="dock">
  <svg viewBox="0 0 56 74"><use href="#d-finder" x="7" y="14" width="42" height="40"/><circle cx="27" cy="67" r="3"/></svg>
  <svg viewBox="0 0 56 74"><use href="#d-slack" x="5" y="11" width="46" height="46"/><circle cx="27" cy="67" r="3"/></svg>
  <svg viewBox="0 0 56 74"><use href="#d-chrome" x="4" y="10" width="48" height="48"/><circle cx="27" cy="67" r="3"/></svg>
  <svg viewBox="0 0 56 74"><use href="#d-spotify" x="5" y="11" width="46" height="46"/><circle cx="27" cy="67" r="3"/></svg>
  <svg viewBox="0 0 56 74"><rect x="2" y="8" width="52" height="52" rx="8" fill="#0b0b0d"/><g fill="none" stroke="#2b6fa5"><circle cx="28" cy="34" r="22" stroke-width="3" stroke-dasharray="1.800 1.600"/><circle cx="28" cy="34" r="18" stroke-width="3" stroke-dasharray="1.500 1.300"/><circle cx="28" cy="34" r="14.500" stroke-width="2" stroke-dasharray="1.200 1"/></g><rect x="3" y="28" width="50" height="12" fill="#0b0b0d" opacity=".75"/><text x="28" y="38.500" text-anchor="middle" class="t-sonos" textLength="47">SONOS</text></svg>
  <svg viewBox="0 0 56 74"><path d="M5 16 37 10 49 50 13 56Z" fill="#fbfbfb"/><use href="#i-python" x="12" y="20" width="28" height="26"/><path d="M50 26 35 57" stroke="#2d3038" stroke-width="5"/><path d="M39 48 35 57" stroke="#c8c8c8" stroke-width="3"/></svg>
  <svg viewBox="0 0 56 74"><path d="M8 17 42 10 49 51 15 57Z" fill="#fafafa"/><path d="M8 15 42 10 44 17 10 23Z" fill="#fbd12f"/><path d="M10 28 45 22M11 33 46 27M12 38 47 32M13 43 47 37M14 48 48 42M15 53 49 47" stroke="#c9c9c9"/></svg>
  <svg viewBox="0 0 56 74"><rect x="5" y="13" width="46" height="41" rx="2" fill="#b6c1c9"/><circle cx="28" cy="34" r="16" fill="#a5a5a5" stroke="#1c1c1c" stroke-width="4" stroke-dasharray="2 .8"/><circle cx="28" cy="34" r="12" fill="#a8a8a8" stroke="#2b2b2b" stroke-width="2.500"/><path d="M28 34 16 34M28 34 34 23M28 34 34 45" stroke="#2b2b2b" stroke-width="2.500"/><circle cx="28" cy="34" r="3" fill="#ddd"/></svg>
  <svg viewBox="0 0 56 74"><use href="#d-word" x="5" y="13" width="46" height="42"/><circle cx="27" cy="67" r="3"/></svg>
  <svg viewBox="0 0 56 74"><use href="#d-excel" x="9" y="11" width="38" height="46"/><circle cx="27" cy="67" r="3"/></svg>
  <svg viewBox="0 0 56 74"><path d="M6 15H50L54 54H3Z" fill="#e9e9e9"/><path d="M9 12H46Q48 12 48.500 14L52 46Q52 50 48 50H8Q4 50 5 46L7 14Q7 12 9 12Z" fill="url(#g-grey)"/><path d="M5 44H52V49H5Z" fill="#222"/><text x="28" y="38" text-anchor="middle" class="t-sub">S</text><circle cx="27" cy="67" r="3"/></svg>
  <svg viewBox="0 0 56 74"><path d="M8 14 22 12 30 22 24 34 2 32Z" fill="#ff3d7b"/><path d="M5 28 16 40 12 50 3 43Z" fill="#ef8b33"/><path d="M32 14 50 26V54L34 64 16 50Z" fill="#3f81f0"/><path d="M35 13 49 27 42 36 28 20Z" fill="#5d71dd"/><path d="M6 62 10 40 22 56Z" fill="#a752a8"/><rect x="11" y="22" width="30" height="32" fill="#0a0a0a"/><path d="M15 49H25" stroke="#fff" stroke-width="3"/><text x="13" y="40" class="t-ij">IJ</text></svg>
  <svg viewBox="0 0 56 74"><rect x="6" y="14" width="45" height="40" rx="3" fill="#242424" stroke="#8c8c8c" stroke-width="1.500"/><text x="10" y="30" class="t-term">$</text><rect x="19" y="20" width="6" height="11" fill="#2bb52f"/><circle cx="27" cy="67" r="3"/></svg>
  <svg viewBox="0 0 56 74"><circle cx="28" cy="34" r="21.500" fill="none" stroke="#45b02a" stroke-width="9" stroke-dasharray="85 3 5 2 6 2 5 2 6 2 5 2 6 2 5 2" transform="rotate(-95 28 34)"/></svg>
  <svg viewBox="0 0 56 74"><rect x="5" y="11" width="46" height="46" fill="#260406" stroke="#e9321e" stroke-width="2"/><path d="M14 50Q24 42 28 24Q30 16 26 20Q24 28 34 38Q42 44 42 38Q38 34 22 42Q12 46 14 50Z" fill="none" stroke="#fff" stroke-width="2"/><circle cx="27" cy="67" r="3"/></svg>
  <svg viewBox="0 0 56 74"><circle cx="28" cy="34" r="24" fill="url(#g-fox)"/><path d="M22 10Q40 6 50 20Q56 40 42 52Q50 40 46 24Z" fill="#f9d33c"/><circle cx="28" cy="28" r="18" fill="url(#g-ff)"/><path d="M5 16 11 20Q16 16 22 22Q27 24 21 27Q22 34 30 32Q36 33 30 38Q36 46 46 36Q44 56 26 57Q4 54 4 34Q4 24 6 22Z" fill="url(#g-fox)"/><circle cx="27" cy="67" r="3"/></svg>
  <svg viewBox="0 0 56 74"><use href="#d-safari" x="2" y="11" width="52" height="46"/><circle cx="27" cy="67" r="3"/></svg>
  <svg viewBox="0 0 56 74"><rect x="8" y="14" width="38" height="30" fill="#a98352" stroke="#eee"/><path d="M3 23 41 17 44 46 8 53Z" fill="url(#g-sky)" stroke="#fff" stroke-width="2"/><circle cx="39" cy="42" r="9" fill="#8d9a9f" stroke="#333" stroke-width="2"/><path d="M32 48H47L45 56H34Z" fill="#8a7f70"/><circle cx="27" cy="67" r="3"/></svg>
  <i class="sep"></i>
  <svg viewBox="0 0 56 74"><path d="M11 14H45V29L47 31V50H45V57H11Z" fill="#f0f0f0"/><path d="M14 19H34M14 23H32M14 27H40M14 31H42M14 35H42M14 39H42M14 43H42M14 47H42M14 51H42" stroke="#b5b5b5" stroke-width="2"/><path d="M11 15V56" stroke="#222" stroke-width="3" stroke-dasharray="2 1.500"/><path d="M34 14 45 26H36Z" fill="#d5d5d5"/></svg>
  <svg viewBox="0 0 56 74"><use href="#d-finder" x="35" y="42" width="17" height="16"/></svg>
  <svg viewBox="0 0 56 74"><rect x="4" y="20" width="48" height="28" fill="#7d7d7d"/><rect x="4" y="20" width="48" height="4" fill="#222"/><rect x="17" y="22" width="22" height="10" fill="#fff"/><path d="M8 32H14M8 37H20M8 41H18" stroke="#555"/><use href="#d-safari" x="34" y="41" width="20" height="18"/></svg>
  <svg viewBox="0 0 56 74"><rect x="4" y="20" width="48" height="28" fill="#f3f3f3"/><path d="M4 22H52M4 25H52" stroke="#c2d3c2" stroke-width="1.500"/><rect x="9" y="28" width="38" height="16" fill="#e0e0e0" stroke="#999"/><path d="M9 29H26M30 29H44" stroke="#444" stroke-width="2"/><use href="#d-excel" x="35" y="41" width="17" height="18"/></svg>
  <svg viewBox="0 0 56 74"><rect x="4" y="20" width="48" height="28" fill="#fafafa"/><path d="M4 22H52M4 25H52" stroke="#c2d3c2" stroke-width="1.500"/><use href="#d-excel" x="35" y="41" width="17" height="18"/></svg>
  <svg viewBox="0 0 56 74"><rect x="4" y="20" width="48" height="28" fill="#b8c0cc"/><path d="M4 20H52V27H4Z" fill="#dfe5ee"/><rect x="11" y="28" width="36" height="20" fill="#fff"/><path d="M15 32H33M15 36H37M15 40H34M15 44H32" stroke="#aaa"/><use href="#d-word" x="34" y="41" width="19" height="17"/></svg>
  <svg viewBox="0 0 56 74"><rect x="4" y="20" width="48" height="28" fill="#b8c0cc"/><path d="M4 20H52V27H4Z" fill="#dfe5ee"/><rect x="11" y="28" width="36" height="20" fill="#fff"/><rect x="15" y="33" width="10" height="6" fill="#a9c8dc"/><path d="M31 36H40" stroke="#888"/><path d="M15 43H32" stroke="#555"/><path d="M15 46H26" stroke="#42b06a"/><use href="#d-word" x="34" y="41" width="19" height="17"/></svg>
  <svg viewBox="0 0 56 74"><rect x="3" y="14" width="50" height="40" fill="#0e3641"/><rect x="3" y="14" width="50" height="2" fill="#ddd"/><path d="M6 22H30M6 27H36M6 32H26M14 37H40M6 42H32M6 47H28" stroke="#2d5a62"/></svg>
  <svg viewBox="0 0 56 74"><rect x="3" y="20" width="50" height="28" fill="#151515"/><path d="M14 20V48M42 20V48" stroke="#444"/><path d="M18 28H26M18 33H38M18 37H38M18 41H38M6 26H11M6 31H11" stroke="#666"/><path d="M3 47.500H36" stroke="#37b35b" stroke-width="2"/><rect x="33" y="23" width="4" height="2" fill="#37b35b"/><use href="#d-spotify" x="35" y="41" width="18" height="18"/></svg>
  <svg viewBox="0 0 56 74"><rect x="3" y="20" width="50" height="28" fill="#2c2c2c"/><rect x="3" y="20" width="50" height="2" fill="#999"/><path d="M12 26H34M14 29H30M12 33H28M10 37H24M12 41H30" stroke="#9a5f35" stroke-width="1.500"/><path d="M3 42H40" stroke="#b58a3a"/><use href="#d-chrome" x="35" y="41" width="18" height="18"/></svg>
  <svg viewBox="0 0 56 74"><rect x="3" y="14" width="49" height="40" fill="#f6f6f6"/><rect x="3" y="14" width="11" height="40" fill="#2f4861"/><path d="M4 20H12M4 24H11M4 28H12M4 32H10M4 42H11M4 46H12" stroke="#8898a8"/><path d="M17 20H30M17 24H27M33 17H50M34 22H46" stroke="#999"/><rect x="19" y="34" width="11" height="12" fill="#35502f"/><use href="#d-slack" x="34" y="41" width="18" height="18"/></svg>
  <svg viewBox="0 0 56 74"><path d="M11 17Q18 8 28 11Q38 7 45 16L44 20H12Z" fill="#c9c9c9"/><path d="M17 18 24 13 30 18ZM32 18 38 13 40 19Z" fill="#454545"/><circle cx="26" cy="16" r="2" fill="#3aa6c9"/><circle cx="37" cy="17" r="2" fill="#c96a3a"/><path d="M10 17H46L42 54Q41 57 28 57Q15 57 14 54Z" fill="url(#g-trash)" stroke="#eee"/></svg>
</footer>
</body>
</html>
```
FILE: styles.css
```css
* { box-sizing: border-box; }
html, body { margin: 0; width: 2560px; height: 1600px; overflow: hidden; }
body {
  position: relative;
  display: flex;
  flex-direction: column;
  background: #1a1a1c;
  font-family: "Liberation Sans", Arial, sans-serif;
  color: #000;
  white-space: nowrap;
}
p, h2, h3, h4 { margin: 0; }
svg { display: block; flex: none; }
.defs { position: absolute; }

/* menu bar */
.menubar {
  display: flex;
  align-items: center;
  height: 44px;
  margin-bottom: 2px;
  background: #d4d4d4;
  font-size: 28px;
  line-height: 45px;
  letter-spacing: .6px;
  color: #222;
}
.apple { width: 32px; height: 32px; margin: -3px 0 0 39px; }
.app-menu {
  display: grid;
  grid-template-columns: 147px 83px 88px 99px 130px 185px 128px 143px 80px;
  margin-left: 37px;
}
.app-menu b { letter-spacing: .3px; }
.status {
  display: grid;
  align-items: center;
  grid-template-columns: 57px 61px 60px 58px 64px 61px 75px 300px 223px 59px 38px;
  margin-left: 267px;
}
.status svg { width: 36px; height: 32px; }
.status .wifi { width: 42px; }
.status .batt { width: 46px; height: 25px; }
.status .search { width: 30px; height: 30px; }
.status .list { width: 38px; height: 22px; }
.status .pct { font-size: 25px; letter-spacing: 0; }
.status b { letter-spacing: .1px; }

/* browser window */
.window { flex: none; height: 1480px; background: #f1f1f1; border-radius: 10px 10px 0 0; overflow: hidden; }
.tabstrip { display: flex; height: 74px; background: #d7d7d7; box-shadow: inset 0 -1px #999; }
.lights { display: flex; gap: 16px; padding: 26px 0 0 24px; width: 144px; }
.lights i { width: 24px; height: 24px; border-radius: 50%; border: 1px solid #e2493f; background: #fc605c; }
.lights i:nth-child(2) { background: #fdbc40; border-color: #e0a030; }
.lights i:nth-child(3) { background: #34c84a; border-color: #27aa35; }
.tabs { display: flex; padding: 17px 0 0 34px; width: 2202px; }
.tab { position: relative; display: flex; flex: none; width: 114.77px; height: 57px; padding-top: 13px; font-size: 24.5px; line-height: 32px; letter-spacing: .6px; }
.tab:nth-child(-n+5) { width: 114px; }
.tab .shape { position: absolute; left: -34px; top: 0; width: 142px; height: 57px; }
.fav { position: relative; width: 32px; height: 32px; }
.tab span { position: relative; width: 40px; margin-left: 10.500px; overflow: hidden; -webkit-mask-image: linear-gradient(90deg, #000 55%, transparent); mask-image: linear-gradient(90deg, #000 55%, transparent); }
.tab.on span { width: 9px; }
.tab .x { position: relative; width: 14px; height: 14px; margin: 9px 0 0 8px; }
.newtab { width: 65px; height: 32px; margin-top: 33px; }
.sync { width: 26px; height: 24px; margin: 27px 0 0 24px; }
.who { margin: 23px 0 0 10px; font-size: 24px; line-height: 34px; letter-spacing: .6px; }

.toolbar { display: flex; align-items: center; height: 72px; padding-left: 22px; }
.nav { width: 28px; height: 28px; margin-right: 28px; }
.omnibox { display: flex; align-items: center; width: 1799px; height: 54px; margin-left: -5px; border: 1px solid #b3b3b3; border-radius: 6px; background: #fff; }
.info { width: 28px; height: 28px; margin: 0 11px 0 13px; }
.url { flex: 1; padding-top: 2px; font-size: 28px; line-height: 50px; letter-spacing: .78px; }
.url em { font-style: normal; color: #808080; }
.star { width: 30px; height: 28px; margin-right: 14px; }
.exts { display: grid; align-items: center; grid-template-columns: 56px 56px 56px 57px 55px 56px 57px 51px 72px 8px; margin-left: 20px; }
.exts svg { width: 32px; height: 32px; }
.exts .onext { width: 40px; height: 40px; margin-top: 8px; }
.exts .dots { width: 8px; height: 28px; fill: #5a5a5a; }
.rgb circle { mix-blend-mode: screen; }
.rgb { isolation: isolate; }

.bookmarks {
  display: grid;
  grid-template-columns: 124px 168px 132px 162px 264px 246px 178px 212px 147px 151px 156px 140px;
  height: 48px;
  padding-left: 26px;
  box-shadow: inset 0 -1px #b0b0b0;
  font-size: 25px;
  letter-spacing: .75px;
}
.bookmarks a { display: flex; align-items: center; height: 38px; gap: 6.500px; line-height: 38px; }
.bookmarks svg { width: 32px; height: 32px; }
.bookmarks svg.small { width: 27px; height: 27px; }

/* page */
.page { height: 1286px; background: #808080; overflow: hidden; font-size: 28px; color: #1a1a1a; }
.hero { display: flex; height: 360px; background: #000; color: #808080; font-size: 42px; line-height: 61px; }
.logo { width: 220px; height: 220px; margin: 98px 180px 0 78px; }
.quote { width: 1607px; padding-top: 165px; font-style: italic; }
.quote p { display: flex; justify-content: space-between; height: 60px; }
.quote p:first-child { padding: 0 7px 0 7px; }
.mailing { margin: 140px 0 0 182px; }

.survey { width: 2340px; height: 1000px; margin: 158px 0 0 110px; border: 2px solid #666; padding-left: 48px; }
.thanks { margin-left: -48px; text-align: center; font-size: 36px; line-height: 168px; }
.q { font-size: 36px; font-weight: bold; }
.q1 { padding: 9px 0 0 2px; height: 82px; line-height: 73px; letter-spacing: .05px; }
.q2 { padding: 11px 0 0 12px; height: 96px; line-height: 85px; }
.q3 { padding: 13px 0 0 12px; height: 106px; line-height: 93px; }
.q small { margin-left: 10px; font-size: 24px; font-weight: normal; color: #8a0000; }
.opts { display: grid; grid-template-columns: 380px 378px 380px 380px 420px; height: 28px; margin-left: 10px; line-height: 28px; }
.opts label { display: flex; align-items: center; gap: 8px; }
.opts .four { gap: 11px; }
.opts i { flex: none; width: 28px; height: 28px; border: 2px solid #636363; border-radius: 50%; box-shadow: inset 0 2px 2px rgba(0, 0, 0, .08); }
.opts i.on { border: 10px solid #1d5088; background: #8a8f94; }
.opts.big { height: 70px; }
.opts.big label { height: 52px; }
.opts.big i, .opts.yesno i { width: 32px; height: 32px; }
.opts.big .on, .opts.yesno .on { border-width: 11px; }
.opts.big .other { height: 69px; gap: 16px; }
.other .field { align-self: flex-start; width: 336px; height: 70px; padding-left: 19px; border: 2px solid #666; line-height: 66px; color: #404040; box-shadow: 5px 5px 6px 2px #666; background: #808080; }
.opts.yesno { grid-template-columns: 390px 390px; height: 32px; line-height: 32px; }
.survey h2 { height: 130px; padding: 38px 0 0 2px; font: bold 48px/92px "Liberation Serif", "Times New Roman", serif; }
.inputs { display: grid; grid-template-columns: 1078px 1088px; gap: 40px; margin-left: 12px; }
.inputs span { height: 68px; padding-left: 24px; border: 2px solid #666; border-radius: 8px; line-height: 65px; box-shadow: 5px 5px 6px 2px #666; background: #808080; color: #262626; }
.inputs .ph { color: #4d4d4d; }

/* newsletter dialog */
.modal {
  position: absolute;
  left: 682px;
  top: 302px;
  width: 1196px;
  height: 456px;
  padding: 0 30px;
  border-radius: 12px;
  background: #fff;
  box-shadow: 0 10px 30px rgba(0, 0, 0, .5), 0 0 0 1px rgba(0, 0, 0, .2);
  color: #333;
  font-size: 28px;
}
.modal-head { display: flex; height: 140px; padding-left: 347px; }
.modal h4 { flex: 1; font-size: 36px; font-weight: normal; line-height: 108px; }
.close { font-size: 42px; line-height: 93px; color: #ccc; -webkit-text-stroke: 1.500px #ccc; }
.email { height: 68px; padding-left: 24px; border: 2px solid #66afe9; border-radius: 8px; line-height: 65px; color: #555; box-shadow: 0 0 16px rgba(102, 175, 233, .6), inset 0 2px 2px rgba(0, 0, 0, .075); }
.certify { display: flex; align-items: center; height: 122px; padding-left: 260px; gap: 28px; }
.check { width: 24px; height: 24px; }
.actions { display: flex; justify-content: flex-end; padding-top: 28px; }
.actions button { width: 152px; height: 68px; padding: 0; border: 2px solid #2e6da4; border-radius: 8px; background: #337ab7; color: #fff; font: 28px/64px "Liberation Sans", Arial, sans-serif; }
.tip { position: absolute; left: 548px; top: 223px; display: flex; align-items: center; width: 401px; height: 71px; padding-left: 15px; gap: 11px; border: 1px solid #b5b5b5; border-radius: 5px; background: #fff; box-shadow: 0 12px 22px rgba(0, 0, 0, .3), 0 2px 6px rgba(0, 0, 0, .2); color: #000; font-size: 26px; line-height: 32px; letter-spacing: .58px; }
.arrow { position: absolute; left: 33px; top: -17px; width: 32px; height: 18px; }
.warn { width: 38px; height: 38px; }

/* dock */
.dock { position: absolute; left: 422px; top: 1526px; display: flex; width: 1716px; height: 74px; padding-left: 6px; border-radius: 10px 10px 0 0; background: #676366; box-shadow: 0 0 30px rgba(0, 0, 0, .12); }
.dock svg { width: 56px; height: 74px; }
.sep { width: 2px; height: 58px; margin: 11px 10px 0 12px; background: #3c3a3c; }

/* lettering inside icons */
text { font-family: "Liberation Sans", Arial, sans-serif; font-weight: bold; letter-spacing: 0; }
.t-sth { font-size: 14px; fill: #e8452c; }
.t-r { font: bold 21px "Liberation Sans", sans-serif; fill: #fff; }
.t-qa { font-size: 14px; fill: #fff; }
.t-q { font: bold 30px "Liberation Serif", serif; fill: #a82400; }
.t-css { font-size: 13px; fill: #fff; }
.t-abp { font-size: 17px; fill: #fff; }
.t-on { font-size: 20px; fill: #fff; font-weight: normal; }
.t-slack { font: bold 27px "Lato", sans-serif; fill: #4a2545; }
.t-sonos { font: 12px "Lato", sans-serif; fill: #fff; }
.t-sub { font-size: 28px; fill: #f59a2c; }
.t-ij { font: bold 20px "Liberation Mono", monospace; fill: #fff; letter-spacing: -1px; }
.t-term { font: bold 13px "Liberation Mono", monospace; fill: #3bd23f; }
```
